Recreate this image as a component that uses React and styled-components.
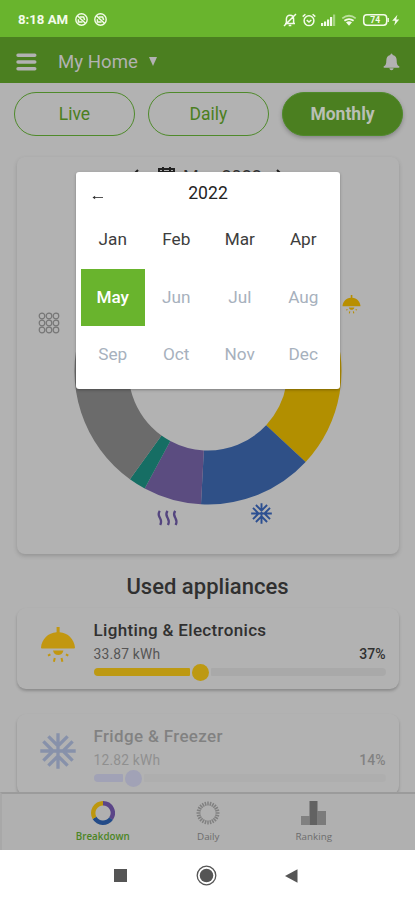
import React from "react";
import styled, { createGlobalStyle } from "styled-components";

const Global = createGlobalStyle`
  * { box-sizing: border-box; }
  body { margin: 0; font-family: Roboto, "Liberation Sans", sans-serif; }
  svg { display: block; flex: none; }
`;

const Phone = styled.div`
  position: relative;
  width: 415px;
  height: 900px;
  display: flex;
  flex-direction: column;
  overflow: hidden;
  background: #b2b2b2;
`;

const StatusBar = styled.div`
  height: 37px;
  flex: none;
  background: #69b42d;
  color: #f4fbea;
  display: flex;
  align-items: center;
  justify-content: space-between;
  padding: 2px 14px 0 18px;
`;

const StatusGroup = styled.div`
  display: flex;
  align-items: center;
  gap: ${(p) => p.$gap}px;
`;

const Clock = styled.span`
  font-size: 13.2px;
  font-weight: 700;
  line-height: 16px;
  width: 51px;
  white-space: nowrap;
`;

const Header = styled.header`
  height: 46px;
  flex: none;
  background: #4b7f20;
  display: flex;
  align-items: center;
  padding: 3px 15px 0 16px;
  color: #b2b2b2;
`;

const HomeName = styled.span`
  font-size: 18.6px;
  letter-spacing: 0.05px;
  margin-left: 21px;
  flex: none;
`;

const Caret = styled.span`
  width: 0;
  height: 0;
  margin: 0 auto 0 11px;
  border: 4.5px solid transparent;
  border-top: 9px solid #b2b2b2;
  border-bottom: 0;
`;

const Tabs = styled.div`
  display: grid;
  grid-template-columns: repeat(3, 121px);
  gap: 13px;
  padding: 9px 0 0 14px;
  flex: none;
`;

const Tab = styled.button`
  height: 44px;
  border-radius: 22px;
  border: 1.5px solid #4f8a2b;
  background: ${(p) => (p.$active ? "#4b7f20" : "transparent")};
  color: ${(p) => (p.$active ? "#b9bfb4" : "#4b7f20")};
  font: ${(p) => (p.$active ? 700 : 400)} 17.5px Roboto, sans-serif;
  box-shadow: ${(p) => (p.$active ? "0 2px 4px rgba(0,0,0,.25)" : "none")};
  padding: 0;
`;

const Content = styled.main`
  flex: 1;
  min-height: 0;
  overflow: hidden;
  display: flex;
  flex-direction: column;
  align-items: center;
`;

const ChartCard = styled.section`
  position: relative;
  margin-top: 21px;
  width: 382px;
  height: 397px;
  flex: none;
  border-radius: 8px;
  box-shadow: 0 2px 4px rgba(0, 0, 0, 0.17);
  display: flex;
  flex-direction: column;
  align-items: center;
`;

const MonthRow = styled.div`
  display: flex;
  align-items: center;
  gap: 7px;
  height: 24px;
  margin-top: 7px;
  color: #333;
  font-size: 18px;
`;

const MonthLabel = styled.span`
  margin: 0 6px 0 -2px;
`;

const Donut = styled.svg`
  margin-top: 49px;
`;

const ChartMarker = styled.span`
  position: absolute;
  left: ${(p) => p.$x}px;
  top: ${(p) => p.$y}px;
`;

const Heading = styled.h2`
  margin: 20px 0 8px;
  font-size: 22px;
  font-weight: 500;
  line-height: 26px;
  letter-spacing: 0.02px;
  color: #303030;
  flex: none;
`;

const ApplianceCard = styled.article`
  width: 382px;
  height: 81px;
  flex: none;
  margin-bottom: 25px;
  display: grid;
  grid-template-columns: 42px 1fr;
  column-gap: 15px;
  padding: 0 13px 0 20px;
  border-radius: 9px;
  box-shadow: 0 2px 3px rgba(0, 0, 0, 0.22);
`;

const IconCell = styled.div`
  padding-top: 19px;
  display: flex;
  align-items: flex-start;
  justify-content: center;
  opacity: ${(p) => (p.$faded ? 0.36 : 1)};
`;

const Details = styled.div`
  padding-top: 12px;
  opacity: ${(p) => (p.$faded ? 0.37 : 1)};
`;

const Name = styled.div`
  font-size: 17px;
  font-weight: 500;
  line-height: 20px;
  letter-spacing: 0.34px;
  color: #303030;
`;

const Numbers = styled.div`
  display: flex;
  justify-content: space-between;
  line-height: 16px;
  margin-top: 6px;
  font-size: 14px;
  color: #555;
`;

const Energy = styled.span`
  font-size: 13.8px;
  letter-spacing: 0.2px;
`;

const Percent = styled.span`
  font-weight: 500;
  color: #303030;
`;

const Track = styled.div`
  display: flex;
  align-items: center;
  height: 18px;
  margin-top: 1px;
`;

const Fill = styled.div`
  width: ${(p) => p.$w}px;
  height: 8px;
  border-radius: 4px 1px 1px 4px;
  background: ${(p) => p.$color};
`;

const Knob = styled.div`
  width: 17px;
  height: 17px;
  margin: 0 2px;
  border-radius: 50%;
  background: ${(p) => p.$color};
`;

const Rest = styled.div`
  flex: 1;
  height: 8px;
  border-radius: 1px 4px 4px 1px;
  background: #a9a9a9;
`;

const BottomNav = styled.nav`
  height: 58px;
  flex: none;
  border-top: 2px solid #9b9b9b;
  border-left: 2px solid #a8a8a8;
  background: #b0b0b0;
  display: grid;
  grid-template-columns: repeat(3, 105.5px);
  padding-left: 48px;
`;

const NavItem = styled.div`
  display: flex;
  flex-direction: column;
  align-items: center;
  padding-top: 7px;
  gap: 5px;
  font-family: "Open Sans", "Noto Sans", sans-serif;
  font-size: 9.8px;
  line-height: 13px;
  font-weight: ${(p) => (p.$active ? 600 : 500)};
  color: ${(p) => (p.$active ? "#4b8524" : "#6c6c6c")};
`;

const SystemNav = styled.div`
  height: 50px;
  flex: none;
  background: #fff;
  display: flex;
  align-items: center;
  padding: 1px 0 0 114px;
`;

const SystemButton = styled.span`
  margin-right: ${(p) => p.$gap}px;
`;

const Dialog = styled.div`
  position: absolute;
  left: 76px;
  top: 172px;
  width: 264px;
  height: 217px;
  background: #fff;
  border-radius: 3px;
  padding: 0 5px;
  box-shadow: 0 1px 3px rgba(0, 0, 0, 0.3);
`;

const YearRow = styled.div`
  height: 39px;
  display: grid;
  grid-template-columns: 32px 1fr 32px;
  align-items: center;
  text-align: center;
  color: #242424;
  padding-top: 3px;
`;

const Year = styled.span`
  font-size: 17.6px;
`;

const BackArrow = styled.svg`
  margin: 9px 0 0 11px;
`;

const MonthGrid = styled.div`
  display: grid;
  grid-template-columns: repeat(4, 63.5px);
  grid-template-rows: 57.5px 57.5px 56px;
  margin-top: 0;
`;

const Month = styled.div`
  display: flex;
  align-items: center;
  justify-content: center;
  font-size: 17.2px;
  padding-bottom: ${(p) => (p.$state === "past" ? 2 : 0)}px;
  font-weight: ${(p) => (p.$state === "selected" ? 500 : 400)};
  color: ${(p) => ({ selected: "#fff", past: "#3d3d3d", future: "#a7b1bd" })[p.$state]};
  background: ${(p) => (p.$state === "selected" ? "#69b42d" : "none")};
`;

function Blocked() {
  return (
    <svg width="13" height="13" viewBox="0 0 13 13" fill="none" stroke="currentColor">
      <circle cx="6.5" cy="6.5" r="5.7" strokeWidth="1.4" />
      <path d="M2.6 2.9 10.4 10.3" strokeWidth="1.4" />
      <path d="M4.6 4h4l1 3M3.4 6.2v2.9h4.2" strokeWidth="1.5" />
    </svg>
  );
}

function StatusIcons() {
  return (
    <StatusGroup $gap={5}>
      <svg width="14" height="14" viewBox="0 0 14 14" fill="none" stroke="currentColor" strokeWidth="1.5">
        <path d="M2 10.5h10M3.4 10V6c0-2.6 1.4-3.7 3.6-3.7S10.6 3.4 10.6 6v4.2M1 13 13 1M5.7 12.4h2.6" />
      </svg>
      <svg width="14" height="14" viewBox="0 0 14 14" fill="none" stroke="currentColor" strokeWidth="1.5">
        <circle cx="7" cy="7.7" r="4.9" />
        <path d="M.7 3.6 3.4 1.2M13.3 3.6 10.6 1.2M4.7 7.1 7 9l2.4-2" />
      </svg>
      <svg width="15" height="12" viewBox="0 0 15 12" fill="currentColor">
        <path d="M0 9h2.2v3H0zM3 7.5h2.2V12H3zM6 5.5h2.2V12H6zM9 3h2.2v9H9z" />
        <path d="M12 .5h2.2V12H12z" opacity=".45" />
      </svg>
      <svg width="16" height="12" viewBox="0 0 16 12" fill="none" stroke="currentColor" strokeWidth="1.8">
        <path d="M1.3 4.4q6.7-5.2 13.4 0" opacity=".6" />
        <path d="M3.4 6.8q4.6-3.4 9.2 0" />
        <path d="M5 8.3q3-2 6 0L8 11.8z" fill="currentColor" stroke="none" />
      </svg>
      <svg width="39" height="14" viewBox="0 0 39 14">
        <rect x="1.7" y="1.7" width="23" height="10.6" rx="3.2" fill="none" stroke="currentColor" strokeWidth="1.5" />
        <path d="M26.2 5v4" stroke="currentColor" strokeWidth="1.4" />
        <text x="13.2" y="10.1" textAnchor="middle" fontSize="8.5" fontWeight="700" fill="currentColor">74</text>
        <path d="m35.4 1.8-5.2 6h3.1l-1.1 4.8 5-6.2h-3z" fill="currentColor" />
      </svg>
    </StatusGroup>
  );
}

function Lamp({ size, color }) {
  return (
    <svg width={size} height={size} viewBox="0 0 36 36" fill={color}>
      <path d="M16.6 0h3v5.2C28 5.8 34.2 12 35 20.5q0 1-1 1H2q-1 0-1-1C1.8 12 8 5.8 16.6 5.2z" />
      <path d="M13 23.5h10.4c-1 6-9.4 6-10.4 0z" />
      <path d="M10.4 27.4 8 28.7M25.9 27.4l2.4 1.3M14.8 31l-.9 3.8M21.5 31l.9 3.8" stroke={color} strokeWidth="2" />
    </svg>
  );
}

function Snowflake({ size, color }) {
  return (
    <svg width={size} height={size} viewBox="0 0 36 36" fill="none" stroke={color} strokeWidth="3.3">
      {[0, 90, 180, 270].map((a) => (
        <path key={a} transform={`rotate(${a} 18 18)`} d="M18 18V.3M8.4 3.4 18 13l9.6-9.6" />
      ))}
    </svg>
  );
}

const arcs = [
  { color: "#b28f00", from: 0, to: 133 },
  { color: "#2f5087", from: 133, to: 183 },
  { color: "#5b4c80", from: 183, to: 208.3 },
  { color: "#166e64", from: 208.3, to: 215.8 },
  { color: "#6b6b6b", from: 215.8, to: 360 },
];

function slicePath({ from, to }, c, outer, inner) {
  const pt = (deg, r) => {
    const t = (deg * Math.PI) / 180;
    return `${(c + r * Math.sin(t)).toFixed(2)} ${(c - r * Math.cos(t)).toFixed(2)}`;
  };
  const big = to - from > 180 ? 1 : 0;
  return `M${pt(from, outer)}A${outer} ${outer} 0 ${big} 1 ${pt(to, outer)}L${pt(to, inner)}A${inner} ${inner} 0 ${big} 0 ${pt(from, inner)}Z`;
}

const appliances = [
  { name: "Lighting & Electronics", energy: "33.87 kWh", pct: "37%", color: "#bd9912", fill: 96, Icon: Lamp, iconColor: "#c29710" },
  { name: "Fridge & Freezer", energy: "12.82 kWh", pct: "14%", color: "#8588bd", fill: 29, Icon: Snowflake, iconColor: "#3c599e", faded: true },
];

const months = ["Jan", "Feb", "Mar", "Apr", "May", "Jun", "Jul", "Aug", "Sep", "Oct", "Nov", "Dec"];
const selected = 4;

export default function App() {
  return (
    <Phone>
      <Global />
      <StatusBar>
        <StatusGroup $gap={6}>
          <Clock>8:18 AM</Clock>
          <Blocked />
          <Blocked />
        </StatusGroup>
        <StatusIcons />
      </StatusBar>
      <Header>
        <svg width="21" height="18" viewBox="0 0 21 18" stroke="#b2b2b2" strokeWidth="3.4" strokeLinecap="round">
          <path d="M2 2.2h16.8M2 9h16.8M2 15.7h16.8" />
        </svg>
        <HomeName>My Home</HomeName>
        <Caret />
        <svg width="17" height="18" viewBox="0 0 17 18" fill="#b2b2b2">
          <path d="M7.3 2Q7.5.4 8.5.4T9.7 2c3 .6 4 2.8 4 5.7 0 3.3.5 4.4 2.4 5.6.7.7.4 1.5-.5 1.5H1.4c-.9 0-1.2-.8-.5-1.5 1.9-1.2 2.4-2.3 2.4-5.6 0-2.9 1-5.1 4-5.7zM6.3 15.3h4.4q-.4 2-2.2 2t-2.2-2z" />
        </svg>
      </Header>
      <Tabs>
        <Tab>Live</Tab>
        <Tab>Daily</Tab>
        <Tab $active>Monthly</Tab>
      </Tabs>
      <Content>
        <ChartCard>
          <MonthRow>
            <svg width="10" height="16" viewBox="0 0 10 16" fill="none" stroke="#222" strokeWidth="2">
              <path d="M8 2 2 8l6 6" />
            </svg>
            <svg width="31" height="20" viewBox="0 0 31 20" fill="none" stroke="#222" strokeWidth="2">
              <path d="M12 3h15v15H12zM12 6h15M16 1v4M23 1v4" />
            </svg>
            <MonthLabel>May 2022</MonthLabel>
            <svg width="10" height="16" viewBox="0 0 10 16" fill="none" stroke="#222" strokeWidth="2">
              <path d="m2 2 6 6-6 6" />
            </svg>
          </MonthRow>
          <Donut width="268" height="268" viewBox="0 0 268 268">
            {arcs.map((a) => (
              <path key={a.color} d={slicePath(a, 134, 133.5, 79.5)} fill={a.color} />
            ))}
          </Donut>
          <ChartMarker $x={21} $y={155}>
            <svg width="23" height="22" viewBox="0 0 23 22" fill="none" stroke="#777" strokeWidth="1.2">
              {[4, 11, 18].map((y) => [4, 11, 18].map((x) => <circle key={`${x}-${y}`} cx={x} cy={y} r="2.8" />))}
            </svg>
          </ChartMarker>
          <ChartMarker $x={325} $y={138}>
            <Lamp size={19} color="#b88f00" />
          </ChartMarker>
          <ChartMarker $x={140} $y={353}>
            <svg width="22" height="16" viewBox="0 0 22 16" fill="none" stroke="#54457f" strokeWidth="2.3">
              {[0, 7.7, 15.4].map((x) => (
                <path key={x} transform={`translate(${x})`} d="M2.8.8C.4 4.2 1.8 5.8 3 8s1.8 4 .2 7" />
              ))}
            </svg>
          </ChartMarker>
          <ChartMarker $x={234} $y={346}>
            <Snowflake size={21} color="#2c4f91" />
          </ChartMarker>
        </ChartCard>
        <Heading>Used appliances</Heading>
        {appliances.map(({ name, energy, pct, color, fill, Icon, iconColor, faded }) => (
          <ApplianceCard key={name}>
            <IconCell $faded={faded}>
              <Icon size={36} color={iconColor} />
            </IconCell>
            <Details $faded={faded}>
              <Name>{name}</Name>
              <Numbers>
                <Energy>{energy}</Energy>
                <Percent>{pct}</Percent>
              </Numbers>
              <Track>
                <Fill $w={fill} $color={color} />
                <Knob $color={color} />
                <Rest />
              </Track>
            </Details>
          </ApplianceCard>
        ))}
      </Content>
      <BottomNav>
        <NavItem $active>
          <svg width="24" height="24" viewBox="0 0 24 24">
            <path d={slicePath({ from: 0, to: 125 }, 12, 12, 7.6)} fill="#5b4588" />
            <path d={slicePath({ from: 125, to: 240 }, 12, 12, 7.6)} fill="#234b88" />
            <path d={slicePath({ from: 240, to: 360 }, 12, 12, 7.6)} fill="#bd970e" />
          </svg>
          Breakdown
        </NavItem>
        <NavItem>
          <svg width="24" height="24" viewBox="0 0 24 24" stroke="#808080" strokeWidth="1.5">
            {Array.from({ length: 24 }, (_, i) => (
              <path key={i} d="M12 .5v4" transform={`rotate(${i * 15} 12 12)`} />
            ))}
          </svg>
          Daily
        </NavItem>
        <NavItem>
          <svg width="25" height="24" viewBox="0 0 25 24">
            <path d="M0 15h8.5v9H0z" fill="#808080" />
            <path d="M16.5 10H25v14h-8.5z" fill="#7b7b7b" />
            <path d="M8.5 0h8v24h-8z" fill="#626262" />
          </svg>
          Ranking
        </NavItem>
      </BottomNav>
      <SystemNav>
        <SystemButton $gap={69}>
          <svg width="13" height="13"><path d="M0 0h13v13H0z" fill="#555" /></svg>
        </SystemButton>
        <SystemButton $gap={68}>
          <svg width="21" height="21" viewBox="0 0 21 21">
            <circle cx="10.5" cy="10.5" r="9.3" fill="none" stroke="#555" strokeWidth="1.3" />
            <circle cx="10.5" cy="10.5" r="6.8" fill="#555" />
          </svg>
        </SystemButton>
        <SystemButton $gap={0}>
          <svg width="13" height="14" viewBox="0 0 13 14"><path d="M0 7 12.5.2v13.6z" fill="#555" /></svg>
        </SystemButton>
      </SystemNav>
      <Dialog>
        <YearRow>
          <BackArrow width="12" height="7" viewBox="0 0 12 7">
            <path d="M1 3.5h10" stroke="#555" strokeWidth="1" />
            <path d="m.5 3.5 2.6-1.7v3.4z" fill="#333" />
          </BackArrow>
          <Year>2022</Year>
        </YearRow>
        <MonthGrid>
          {months.map((m, i) => (
            <Month key={m} $state={i === selected ? "selected" : i < selected ? "past" : "future"}>
              {m}
            </Month>
          ))}
        </MonthGrid>
      </Dialog>
    </Phone>
  );
}
